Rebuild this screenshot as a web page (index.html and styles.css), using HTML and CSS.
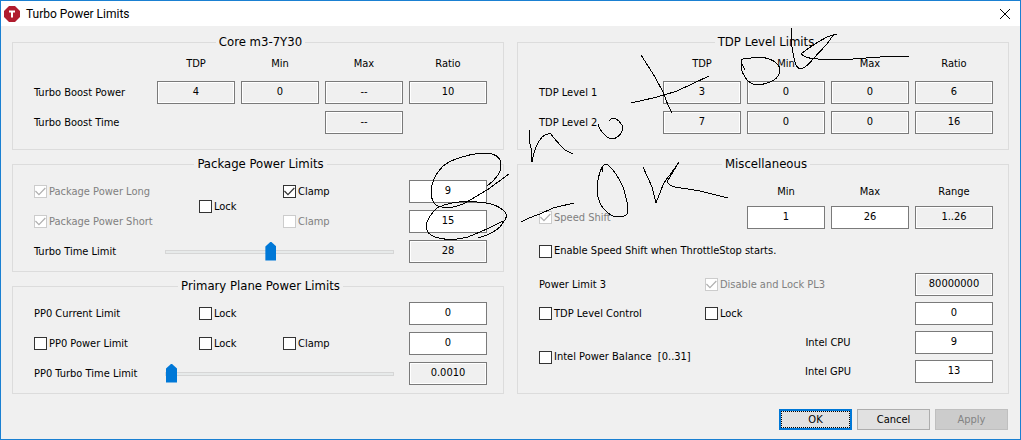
FILE: index.html
```html
<!DOCTYPE html>
<html lang="en">
<head>
<meta charset="utf-8">
<title>Turbo Power Limits</title>
<link rel="stylesheet" href="styles.css">
</head>
<body>
<form class="window">
  <header class="titlebar">
    <svg class="app-icon" width="16" height="16" viewBox="0 0 16 16" aria-hidden="true">
      <path d="M5 0h6l5 5v6l-5 5H5l-5-5V5z" fill="#b01c2e"/>
      <path d="M5 5.5h6M8 5.5v6" stroke="#fff" stroke-width="2" fill="none"/>
    </svg>
    <h1 class="title">Turbo Power Limits</h1>
    <button class="close" type="button" aria-label="Close">
      <svg width="10" height="10" viewBox="0 0 10 10"><path d="M0 0l10 10M10 0L0 10" stroke="#000" fill="none"/></svg>
    </button>
  </header>

  <main class="panels">
    <div class="column column-left">
      <fieldset class="group table-group">
        <legend>Core m3-7Y30</legend>
        <div class="grid values">
          <span class="head c2">TDP</span><span class="head">Min</span><span class="head">Max</span><span class="head">Ratio</span>
          <span>Turbo Boost Power</span>
          <input class="box" readonly value="4" aria-label="Turbo Boost Power TDP">
          <input class="box" readonly value="0" aria-label="Turbo Boost Power Min">
          <input class="box" readonly value="--" aria-label="Turbo Boost Power Max">
          <input class="box" readonly value="10" aria-label="Turbo Boost Power Ratio">
          <label for="tbt">Turbo Boost Time</label>
          <input class="box c4" id="tbt" readonly value="--">
        </div>
      </fieldset>

      <fieldset class="group">
        <legend>Package Power Limits</legend>
        <div class="grid limits">
          <label class="check"><input type="checkbox" checked disabled>Package Power Long</label>
          <label class="check lock-both"><input type="checkbox">Lock</label>
          <label class="check c3"><input type="checkbox" checked>Clamp</label>
          <input class="box" value="9" aria-label="Package Power Long value">
          <label class="check"><input type="checkbox" checked disabled>Package Power Short</label>
          <label class="check c3"><input type="checkbox" disabled>Clamp</label>
          <input class="box" value="15" aria-label="Package Power Short value">
          <div class="slider-row">
            <label for="turbo-time">Turbo Time Limit</label>
            <input class="slider" id="turbo-time" type="range" min="0" max="100" value="46">
          </div>
          <input class="box" readonly value="28" aria-label="Turbo Time Limit value">
        </div>
      </fieldset>

      <fieldset class="group">
        <legend>Primary Plane Power Limits</legend>
        <div class="grid limits">
          <label for="pp0-current">PP0 Current Limit</label>
          <label class="check"><input type="checkbox">Lock</label>
          <input class="box c4" id="pp0-current" value="0">
          <label class="check"><input type="checkbox">PP0 Power Limit</label>
          <label class="check"><input type="checkbox">Lock</label>
          <label class="check"><input type="checkbox">Clamp</label>
          <input class="box" value="0" aria-label="PP0 Power Limit value">
          <div class="slider-row">
            <label for="pp0-time">PP0 Turbo Time Limit</label>
            <input class="slider" id="pp0-time" type="range" min="0" max="100" value="0">
          </div>
          <input class="box" readonly value="0.0010" aria-label="PP0 Turbo Time Limit value">
        </div>
      </fieldset>
    </div>

    <div class="column">
      <fieldset class="group table-group">
        <legend>TDP Level Limits</legend>
        <div class="grid values">
          <span class="head c2">TDP</span><span class="head">Min</span><span class="head">Max</span><span class="head">Ratio</span>
          <span>TDP Level 1</span>
          <input class="box" readonly value="3" aria-label="TDP Level 1 TDP">
          <input class="box" readonly value="0" aria-label="TDP Level 1 Min">
          <input class="box" readonly value="0" aria-label="TDP Level 1 Max">
          <input class="box" readonly value="6" aria-label="TDP Level 1 Ratio">
          <span>TDP Level 2</span>
          <input class="box" readonly value="7" aria-label="TDP Level 2 TDP">
          <input class="box" readonly value="0" aria-label="TDP Level 2 Min">
          <input class="box" readonly value="0" aria-label="TDP Level 2 Max">
          <input class="box" readonly value="16" aria-label="TDP Level 2 Ratio">
        </div>
      </fieldset>

      <fieldset class="group misc-group">
        <legend>Miscellaneous</legend>
        <div class="grid misc">
          <span class="head c3">Min</span><span class="head">Max</span><span class="head">Range</span>
          <label class="check"><input type="checkbox" checked disabled>Speed Shift</label>
          <input class="box c3" value="1" aria-label="Speed Shift Min">
          <input class="box" value="26" aria-label="Speed Shift Max">
          <input class="box" readonly value="1..26" aria-label="Speed Shift Range">
          <label class="check full"><input type="checkbox">Enable Speed Shift when ThrottleStop starts.</label>
          <label for="pl3">Power Limit 3</label>
          <label class="check middle"><input type="checkbox" checked disabled>Disable and Lock PL3</label>
          <input class="box" id="pl3" readonly value="80000000">
          <label class="check"><input type="checkbox">TDP Level Control</label>
          <label class="check middle"><input type="checkbox">Lock</label>
          <input class="box" value="0" aria-label="TDP Level Control value">
          <label class="check balance"><input type="checkbox">Intel Power Balance &nbsp;[0..31]</label>
          <label class="device" for="cpu">Intel CPU</label>
          <input class="box" id="cpu" value="9">
          <label class="device" for="gpu">Intel GPU</label>
          <input class="box" id="gpu" value="13">
        </div>
      </fieldset>
    </div>
  </main>

  <footer class="actions">
    <button class="btn primary" type="button"><span class="focus">OK</span></button>
    <button class="btn" type="button">Cancel</button>
    <button class="btn" type="button" disabled>Apply</button>
  </footer>

  <svg class="ink" width="1021" height="440" viewBox="0 0 1021 440" aria-hidden="true">
    <path d="M641 55L655 77L663 92L668 105L672 113"/>
    <path d="M631 103L653 98Q665 95 677 91L709 76"/>
    <path d="M609 121Q611 118 614 118Q618 119 622 125V131Q619 138 612 139Q607 138 605 135Q600 131 598 124"/>
    <path d="M529 130V139L531 148L532 162Q535 145 542 137Q546 133 551 134Q555 140 565 150L573 154"/>
    <path d="M602 172L603 166Q605 163 608 165Q617 173 623 187Q628 202 628 212Q627 217 617 217Q610 216 605 210Q598 204 597 190Q597 178 602 167"/>
    <path d="M643 167L652 187L656 203L663 185Q667 178 670 175L679 162L667 182Q670 186 675 187L700 191L728 198"/>
    <path d="M521 222Q530 217 540 214L553 208L574 203"/>
    <path d="M487 186C494 181 501 173 501 165C501 157 496 153 483 153C468 154 452 159 443 166C434 175 431 183 431 193Q432 204 438 206Q451 210 465 203L487 190L509 174"/>
    <path d="M478 237H481L487 235Q500 229 502 224Q509 216 505 212Q497 203 477 202Q453 200 437 208Q431 213 427 222Q424 233 435 237Q450 242 468 237L487 229L503 221"/>
    <path d="M745 70L742 64Q740 60 743 59L760 57Q777 59 780 69C780 79 770 84 757 85Q749 84 745 77Q739 68 742 59"/>
    <path d="M791 28V42L794 58Q796 69 801 69Q807 67 813 59L827 44L834 34H837L827 37Q812 45 801 54Q807 59 818 59H853L880 57L909 56"/>
  </svg>
</form>
</body>
</html>
```

FILE: styles.css
```css
* {
  box-sizing: border-box;
}

body {
  margin: 0;
  font: 11px/20px "DejaVu Sans Condensed", "DejaVu Sans", sans-serif;
  color: #000;
}

.window {
  position: relative;
  display: flex;
  flex-direction: column;
  min-height: 100vh;
  border: 1px solid #1a80d2;
  background: #f0f0f0;
}

.titlebar {
  display: flex;
  align-items: center;
  height: 25px;
  padding: 0 10px 0 3px;
  background: #fff;
}

.title {
  flex: 1;
  margin: 0 0 0 6px;
  font: 12px/20px Roboto, sans-serif;
}

.close {
  display: flex;
  padding: 0;
  border: 0;
  background: none;
}

.panels {
  display: grid;
  grid-template-columns: 1fr 1fr;
  gap: 13px;
  padding: 8px 11px 0;
}

.column {
  display: flex;
  flex-direction: column;
  gap: 6px;
}

.group {
  min-width: 0;
  margin: 0;
  padding: 8px 15px 8px 21px;
  border: 1px solid #dcdcdc;
}

.column-left .group {
  padding-right: 16px;
}

.table-group {
  padding-top: 0;
  padding-bottom: 15px;
}

.misc-group {
  padding-bottom: 10px;
}

legend {
  margin: 0 auto;
  padding: 0 3px;
  font-size: 13px;
  line-height: 16px;
}

.grid {
  display: grid;
  align-items: center;
}

.values {
  grid-template-columns: 1fr repeat(4, 78px);
  grid-template-rows: 24px 23px 23px;
  gap: 7px 6px;
}

.limits {
  grid-template-columns: 165fr 84fr 126fr 78px;
  grid-template-rows: repeat(3, 23px);
  row-gap: 7px;
}

.misc {
  grid-template-columns: 1fr 36px repeat(3, 78px);
  grid-template-rows: 20px 23px 32px repeat(4, 23px);
  gap: 6px;
}

.head {
  align-self: end;
  text-align: center;
}

.misc .head {
  line-height: 16px;
}

.c2 { grid-column: 2; }
.c3 { grid-column: 3; }
.c4 { grid-column: 4; }

.lock-both {
  grid-column: 2;
  grid-row: 1 / 3;
}

.slider-row {
  display: flex;
  grid-column: 1 / 4;
  align-items: center;
  padding-right: 15px;
}

.slider-row label {
  width: 131px;
}

.full { grid-column: 1 / 6; }
.middle { grid-column: 2 / 5; }

.balance {
  grid-column: 1 / 3;
  grid-row: 6 / 8;
}

.device {
  grid-column: 3 / 5;
  text-align: center;
}

.box {
  width: 100%;
  min-width: 0;
  height: 23px;
  margin: 0;
  padding: 0 0 3px;
  border: 1px solid #7a7a7a;
  border-radius: 0;
  background: #fff;
  color: #000;
  font: inherit;
  text-align: center;
}

.box:read-only {
  background: #f0f0f0;
  box-shadow: inset 0 0 0 1px #fff;
}

.check {
  display: flex;
  align-items: center;
  gap: 2px;
  white-space: nowrap;
}

.check:has(:disabled) {
  color: #808080;
}

.check input {
  appearance: none;
  flex: none;
  width: 13px;
  height: 13px;
  margin: 0;
  border: 1px solid #333;
  background: #fff;
}

.check input:disabled {
  border-color: #ccc;
}

.check input:checked::before {
  content: "";
  display: block;
  width: 11px;
  height: 11px;
  background: #333;
  clip-path: polygon(0 50%, 8% 42%, 36% 70%, 90% 14%, 98% 23%, 36% 86%);
}

.check input:disabled:checked::before {
  background: #b0b0b0;
}

.slider {
  appearance: none;
  flex: 1;
  min-width: 0;
  height: 19px;
  margin: 0;
  background: none;
}

.slider::-webkit-slider-runnable-track {
  height: 4px;
  border: 1px solid #d6d6d6;
  background: #e7eaea;
}

.slider::-webkit-slider-thumb {
  appearance: none;
  width: 11px;
  height: 19px;
  margin-top: -9px;
  background: #0078d7;
  clip-path: polygon(50% 0, 100% 26%, 100% 100%, 0 100%, 0 26%);
}

.actions {
  display: flex;
  justify-content: flex-end;
  gap: 5px;
  padding: 15px 12px 8px;
}

.btn {
  width: 73px;
  height: 21px;
  padding: 0;
  border: 1px solid #adadad;
  background: #e1e1e1;
  color: #000;
  font: inherit;
  line-height: 17px;
}

.btn:disabled {
  border-color: #bfbfbf;
  background: #ccc;
  color: #838383;
}

.primary {
  border: 2px solid #0078d7;
}

.focus {
  display: block;
  border: 1px dotted #000;
  line-height: 15px;
}

.ink {
  position: absolute;
  top: -1px;
  left: -1px;
  fill: none;
  stroke: #000;
  stroke-width: 1;
  shape-rendering: crispEdges;
  pointer-events: none;
}
```
